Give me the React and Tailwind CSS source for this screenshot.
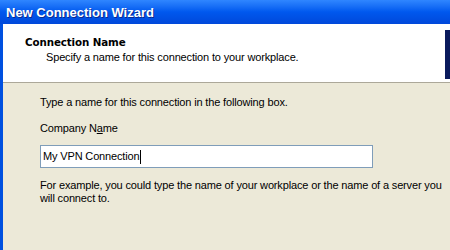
export default function App() {
  return (
    <div className="w-[450px] h-[250px] overflow-hidden bg-[#ECE9D8] flex flex-col font-['Liberation_Sans',sans-serif] text-[11px] leading-[13px] tracking-[-0.15px] text-black">
      <div className="h-[24px] shrink-0 flex items-center pl-[6px] bg-gradient-to-b from-[#2F86FF] via-[#0058EE] to-[#0048DA]">
        <span className="text-white font-bold text-[13px] tracking-normal [text-shadow:1px_1px_0_#0A2A8E]">
          New Connection Wizard
        </span>
      </div>
      <div className="flex flex-1">
        <div className="w-[3px] shrink-0 bg-[#0050E0]" />
        <div className="flex-1 flex flex-col">
          <div className="h-[59px] shrink-0 bg-white border-b border-[#ACA899] flex">
            <div className="flex-1 pl-[22px] pt-[12px]">
              <div className="font-bold text-[10.3px] font-['DejaVu_Sans',sans-serif] tracking-[-0.1px]">Connection Name</div>
              <div className="pl-[21px] mt-[2px]">Specify a name for this connection to your workplace.</div>
            </div>
            <div className="w-[10px] mt-[6px] mb-[3px] bg-[#0A1A5C] -mr-[5px]" />
          </div>
          <div className="pl-[37px] pt-[13px] pr-[6px]">
            <div>Type a name for this connection in the following box.</div>
            <div className="mt-[13px]">
              Company N<span className="underline">a</span>me
            </div>
            <div className="mt-[10px] w-[333px] h-[23px] bg-white border border-[#7F9DB9] flex items-center pl-[2px]">
              <span>My VPN Connection</span>
              <span className="w-px h-[14px] bg-black" />
            </div>
            <div className="mt-[11px]">
              For example, you could type the name of your workplace or the name of a server you will connect to.
            </div>
          </div>
        </div>
      </div>
    </div>
  );
}
